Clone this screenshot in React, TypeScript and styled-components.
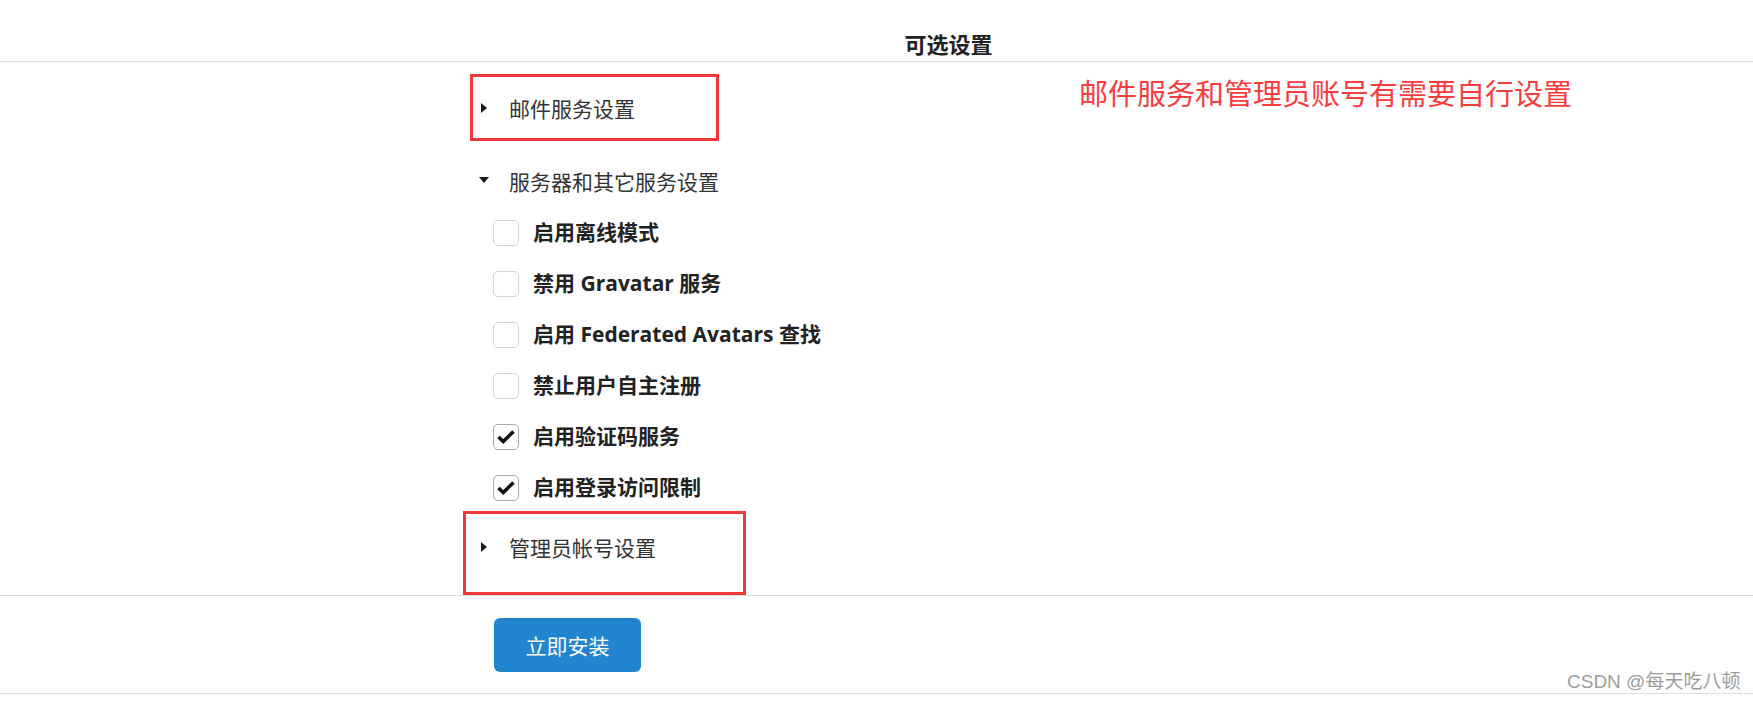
import React from "react";
import styled, { createGlobalStyle } from "styled-components";

const GlobalStyle = createGlobalStyle`
  html, body { margin: 0; padding: 0; background: #fff; }
  body {
    font-family: "Open Sans", "Noto Sans CJK SC", sans-serif;
    color: rgba(0, 0, 0, 0.87);
  }
  * { box-sizing: border-box; }
`;

const Page = styled.div`
  position: relative;
  width: 1753px;
  height: 702px;
  overflow: hidden;
  background: #fff;
`;

const Header = styled.header`
  height: 62px;
  padding: 33px 0 0 144px;
  border-bottom: 1px solid #dedede;
`;

const Title = styled.h4`
  margin: 0;
  font-size: 22px;
  line-height: 22px;
  font-weight: 700;
  text-align: center;
  color: #222;
`;

const Section = styled.section`
  padding: 26px 0 26px 478px;
  border-bottom: 1px solid #dedede;
`;

const AccTitle = styled.div<{ $gap?: number }>`
  display: flex;
  align-items: center;
  height: 42px;
  margin-top: ${(p) => p.$gap ?? 0}px;
  font-size: 21px;
  line-height: 21px;
  color: #333;
`;

const Caret = styled.span<{ $open?: boolean }>`
  display: flex;
  justify-content: center;
  width: 12px;
  margin-right: 19px;
  margin-bottom: ${(p) => (p.$open ? 5 : 3)}px;
  &::before {
    content: "";
    display: block;
    width: 0;
    height: 0;
    ${(p) =>
      p.$open
        ? `border-left: 5.5px solid transparent;
           border-right: 5.5px solid transparent;
           border-top: 6px solid #1b1b1b;`
        : `border-top: 5.5px solid transparent;
           border-bottom: 5.5px solid transparent;
           border-left: 6px solid #1b1b1b;`}
  }
`;

const CheckList = styled.div`
  display: flex;
  flex-direction: column;
  padding: 4px 0 0 15px;
`;

const CheckRow = styled.label`
  display: flex;
  align-items: center;
  gap: 14px;
  height: 51px;
  font-size: 21px;
  line-height: 21px;
  font-weight: 700;
  color: #222;
`;

const Box = styled.span<{ $checked?: boolean }>`
  display: flex;
  align-items: center;
  justify-content: center;
  width: 26px;
  height: 26px;
  border-radius: 5px;
  border: 1px solid ${(p) => (p.$checked ? "#a9a9aa" : "#d4d4d5")};
  background: #fff;
`;

const Footer = styled.footer`
  padding: 22px 0 21px 494px;
  border-bottom: 1px solid #dedede;
`;

const Button = styled.button`
  width: 147px;
  height: 54px;
  border: none;
  border-radius: 6px;
  background: #2185d0;
  color: #fff;
  font-family: inherit;
  font-size: 21px;
  font-weight: 400;
  padding: 0;
`;

const RedBox = styled.div<{ $x: number; $y: number; $w: number; $h: number }>`
  position: absolute;
  left: ${(p) => p.$x}px;
  top: ${(p) => p.$y}px;
  width: ${(p) => p.$w}px;
  height: ${(p) => p.$h}px;
  border: 3px solid #f0393b;
  pointer-events: none;
`;

const Note = styled.div`
  position: absolute;
  left: 1079px;
  top: 78px;
  font-family: "Noto Sans CJK SC", sans-serif;
  font-size: 29px;
  line-height: 29px;
  color: #fa3c3c;
  white-space: nowrap;
`;

const Watermark = styled.div`
  position: absolute;
  left: 1567px;
  top: 672px;
  font-family: "Liberation Sans", "Noto Sans CJK SC", sans-serif;
  font-size: 19px;
  line-height: 19px;
  color: #9d9d9d;
  white-space: nowrap;
`;

const Check = () => (
  <svg width="18" height="14" viewBox="0 0 18 14">
    <path
      d="M1.5 7 L6.2 11.5 L16.5 1.5"
      fill="none"
      stroke="#111"
      strokeWidth="3.6"
      strokeLinejoin="miter"
    />
  </svg>
);

const options: { label: string; checked: boolean }[] = [
  { label: "启用离线模式", checked: false },
  { label: "禁用 Gravatar 服务", checked: false },
  { label: "启用 Federated Avatars 查找", checked: false },
  { label: "禁止用户自主注册", checked: false },
  { label: "启用验证码服务", checked: true },
  { label: "启用登录访问限制", checked: true },
];

export default function App() {
  return (
    <Page>
      <GlobalStyle />
      <Header>
        <Title>可选设置</Title>
      </Header>
      <Section>
        <AccTitle>
          <Caret />
          邮件服务设置
        </AccTitle>
        <AccTitle $gap={31}>
          <Caret $open />
          服务器和其它服务设置
        </AccTitle>
        <CheckList>
          {options.map((o) => (
            <CheckRow key={o.label}>
              <Box $checked={o.checked}>{o.checked && <Check />}</Box>
              {o.label}
            </CheckRow>
          ))}
        </CheckList>
        <AccTitle $gap={14}>
          <Caret />
          管理员帐号设置
        </AccTitle>
      </Section>
      <Footer>
        <Button>立即安装</Button>
      </Footer>
      <RedBox $x={470} $y={74} $w={249} $h={67} />
      <RedBox $x={463} $y={511} $w={283} $h={84} />
      <Note>邮件服务和管理员账号有需要自行设置</Note>
      <Watermark>CSDN @每天吃八顿</Watermark>
    </Page>
  );
}
